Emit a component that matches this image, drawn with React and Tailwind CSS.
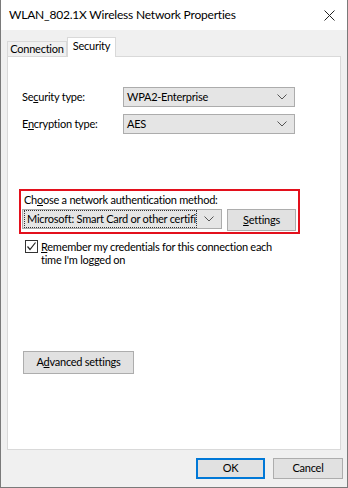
import { useState } from "react";

const font = { fontFamily: 'Lato, "Liberation Sans", Arial, sans-serif' };

function Chevron() {
  return (
    <svg width="10" height="6" viewBox="0 0 10 6" className="shrink-0">
      <path d="M0.5 0.5 L5 5 L9.5 0.5" fill="none" stroke="#555" strokeWidth="1" />
    </svg>
  );
}

function Combo({ value, focus, className }) {
  return (
    <div
      className={`flex items-center h-[20px] bg-[#e5e5e5] border border-[#acacac] pr-[7px] ${className}`}
    >
      <div
        className={`flex-1 min-w-0 h-full flex items-center overflow-hidden whitespace-nowrap ${
          focus ? "border border-dotted border-[#333] pl-[2px] m-[1px] h-[16px]" : "pl-[3px]"
        }`}
      >
        {value}
      </div>
      <div className="w-[16px] flex justify-end">
        <Chevron />
      </div>
    </div>
  );
}

function Btn({ children, className = "", primary }) {
  return (
    <div
      className={`flex items-center justify-center bg-[#e1e1e1] border ${
        primary ? "border-[#0078d7] shadow-[inset_0_0_0_1px_#0078d7]" : "border-[#adadad]"
      } ${className}`}
    >
      {children}
    </div>
  );
}

export default function App() {
  const [remember, setRemember] = useState(true);

  return (
    <div
      className="w-[348px] h-[488px] flex flex-col border border-t-0 border-[#7a7a7a] text-[11px] tracking-[-0.25px] text-black bg-[#f0f0f0] overflow-hidden"
      style={font}
    >
      {/* Title bar */}
      <div className="h-[30px] bg-white flex items-center justify-between pl-[8px] pr-[12px] shrink-0">
        <span className="text-[12px] tracking-[-0.2px]">WLAN_802.1X Wireless Network Properties</span>
        <svg width="11" height="11" viewBox="0 0 11 11">
          <path d="M0.5 0.5 L10.5 10.5 M10.5 0.5 L0.5 10.5" stroke="#222" strokeWidth="1" />
        </svg>
      </div>

      {/* Tabs */}
      <div className="flex items-end pl-[6px] mt-[7px] h-[19px] shrink-0 relative z-10">
        <div className="h-[15px] w-[60px] border border-b-0 border-[#d9d9d9] bg-[#f0f0f0] flex items-center justify-center">
          Connection
        </div>
        <div className="h-[20px] w-[49px] -mb-[1px] border border-b-0 border-[#d9d9d9] bg-white flex items-center justify-center pb-[2px]">
          Security
        </div>
      </div>

      {/* Panel */}
      <div className="mx-[6px] h-[394px] bg-white border border-[#d9d9d9] shrink-0 flex flex-col">
        <div className="mt-[30px] flex items-center pl-[14px]">
          <span className="w-[101px]">
            Se<u>c</u>urity type:
          </span>
          <Combo value="WPA2-Enterprise" className="w-[172px]" />
        </div>
        <div className="mt-[7px] flex items-center pl-[14px]">
          <span className="w-[101px]">
            E<u>n</u>cryption type:
          </span>
          <Combo value="AES" className="w-[172px]" />
        </div>

        {/* Highlighted auth method */}
        <div className="mt-[55px] ml-[11px] w-[281px] h-[45px] border-2 border-[#e3101c] pl-[1px] pt-[1px]">
          <div className="pl-[2px] leading-[15px]">
            Ch<u>o</u>ose a network authentication method:
          </div>
          <div className="flex items-start mt-[2px]">
            <Combo value="Microsoft: Smart Card or other certificate" focus className="w-[200px]" />
            <Btn className="ml-[5px] w-[69px] h-[22px]">
              <span>
                <u>S</u>ettings
              </span>
            </Btn>
          </div>
        </div>

        <label className="mt-[6px] ml-[17px] flex items-start gap-[3px] leading-[13px] cursor-default">
          <span
            onClick={() => setRemember(!remember)}
            className="w-[13px] h-[13px] border border-[#333] bg-white shrink-0 flex items-center justify-center"
          >
            {remember && (
              <svg width="11" height="11" viewBox="0 0 11 11">
                <path d="M1.5 5.5 L4 8.5 L9.5 1.5" fill="none" stroke="#222" strokeWidth="1.2" />
              </svg>
            )}
          </span>
          <span>
            <u>R</u>emember my credentials for this connection each
            <br />
            time I'm logged on
          </span>
        </label>

        <Btn className="mt-[85px] ml-[15px] w-[111px] h-[23px]">
          <span>
            A<u>d</u>vanced settings
          </span>
        </Btn>
      </div>

      {/* Footer buttons */}
      <div className="flex justify-end gap-[8px] pr-[4px] mt-[8px]">
        <Btn primary className="w-[69px] h-[21px]">
          OK
        </Btn>
        <Btn className="w-[70px] h-[21px]">Cancel</Btn>
      </div>
    </div>
  );
}
